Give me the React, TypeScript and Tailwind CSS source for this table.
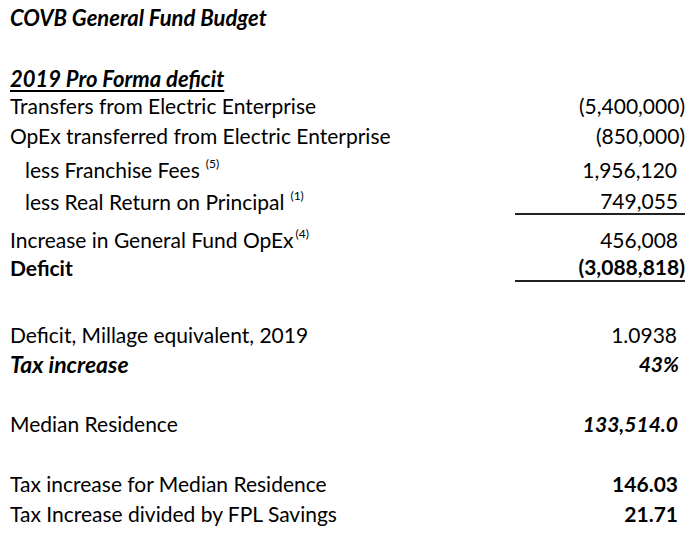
import React from "react";

const font = { fontFamily: "Lato, 'Liberation Sans', sans-serif" };

function Row({
  mt,
  h,
  label,
  value,
  labelClass = "",
  valueClass = "",
  border = false,
}: {
  mt: string;
  h: string;
  label: React.ReactNode;
  value?: React.ReactNode;
  labelClass?: string;
  valueClass?: string;
  border?: boolean;
}) {
  return (
    <div className={`flex ${mt} ${h}`}>
      <div className={`flex-1 flex items-center ${labelClass}`}>{label}</div>
      <div
        className={`w-[170px] flex items-center justify-end ${
          border ? "border-b-2 border-[#222]" : ""
        } ${valueClass}`}
      >
        {value}
      </div>
    </div>
  );
}

const Sup = ({ children, gap }: { children: React.ReactNode; gap: string }) => (
  <sup className={`text-[12px] relative -top-[10px] ${gap}`}>{children}</sup>
);

export default function App() {
  return (
    <div
      className="w-[699px] h-[542px] bg-white text-black text-[21px] pl-[10px] pr-[14px] flex flex-col"
      style={font}
    >
      <Row mt="mt-[2px]" h="h-[30px]" label="COVB General Fund Budget" labelClass="font-bold italic text-[22px]" />
      <Row
        mt="mt-[32px]"
        h="h-[28px]"
        label={<span className="underline underline-offset-[3px] decoration-[1.5px]">2019 Pro Forma deficit</span>}
        labelClass="font-bold italic text-[22px]"
      />
      <Row mt="mt-0" h="h-[28px]" label="Transfers from Electric Enterprise" value="(5,400,000)" />
      <Row mt="mt-[1px]" h="h-[30px]" label="OpEx transferred from Electric Enterprise" value="(850,000)" />
      <Row
        mt="mt-[4px]"
        h="h-[30px]"
        label={
          <span className="pl-[15px]">
            less Franchise Fees<Sup gap="ml-[6px]">(5)</Sup>
          </span>
        }
        value={<span className="pr-[8px]">1,956,120</span>}
      />
      <Row
        mt="mt-[3px]"
        h="h-[27px]"
        border
        label={
          <span className="pl-[15px]">
            less Real Return on Principal<Sup gap="ml-[6px]">(1)</Sup>
          </span>
        }
        value={<span className="pr-[7px]">749,055</span>}
      />
      <Row
        mt="mt-[10px]"
        h="h-[29px]"
        label={
          <span>
            Increase in General Fund OpEx<Sup gap="ml-[2px]">(4)</Sup>
          </span>
        }
        value={<span className="pr-[7px]">456,008</span>}
      />
      <Row
        mt="mt-0"
        h="h-[28px]"
        border
        label="Deficit"
        labelClass="font-bold"
        value="(3,088,818)"
        valueClass="font-bold"
      />
      <Row
        mt="mt-[38px]"
        h="h-[29px]"
        label="Deficit, Millage equivalent, 2019"
        value={<span className="pr-[8px]">1.0938</span>}
      />
      <Row
        mt="mt-0"
        h="h-[30px]"
        label="Tax increase"
        labelClass="font-bold italic text-[23px]"
        value={<span className="pr-[6px]">43%</span>}
        valueClass="font-bold italic"
      />
      <Row
        mt="mt-[30px]"
        h="h-[30px]"
        label="Median Residence"
        value={<span className="pr-[7px]">133,514.0</span>}
        valueClass="font-bold italic"
      />
      <Row
        mt="mt-[30px]"
        h="h-[30px]"
        label="Tax increase for Median Residence"
        value={<span className="pr-[7px]">146.03</span>}
        valueClass="font-bold"
      />
      <Row
        mt="mt-0"
        h="h-[30px]"
        label="Tax Increase divided by FPL Savings"
        value={<span className="pr-[7px]">21.71</span>}
        valueClass="font-bold"
      />
    </div>
  );
}
